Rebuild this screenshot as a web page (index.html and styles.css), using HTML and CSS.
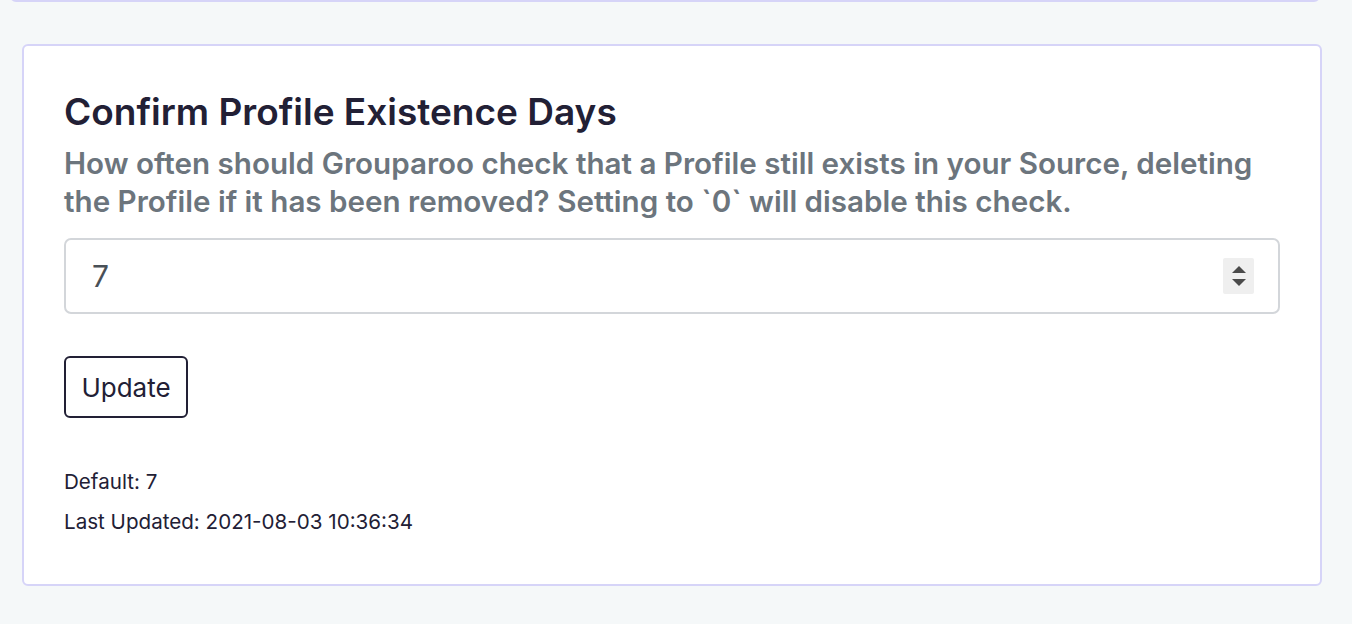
FILE: index.html
```html
<!DOCTYPE html>
<html>
<head>
<meta charset="utf-8">
<link rel="stylesheet" href="styles.css">
</head>
<body>
<div class="page">
  <div class="card card-prev"></div>
  <div class="card">
    <h3 class="title">Confirm Profile Existence Days</h3>
    <p class="desc">How often should Grouparoo check that a Profile still exists in your Source, deleting the Profile if it has been removed? Setting to `0` will disable this check.</p>
    <div class="field">
      <input class="field-input" type="text" value="7">
      <span class="spinner">
        <svg width="16" height="24" viewBox="0 0 16 24"><path d="M8 2 L15 9 L1 9 Z" fill="#4a4a4a"/><path d="M1 15 L15 15 L8 22 Z" fill="#4a4a4a"/></svg>
      </span>
    </div>
    <button class="btn">Update</button>
    <div class="meta">
      <p>Default: 7</p>
      <p>Last Updated: 2021-08-03 10:36:34</p>
    </div>
  </div>
</div>
</body>
</html>
```
FILE: styles.css
```css
* { box-sizing: border-box; }
html, body { margin: 0; padding: 0; }
body {
  background: #f5f8f9;
  font-family: Inter, Roboto, "Liberation Sans", sans-serif;
  color: #212136;
}
.page {
  padding: 0 30px 0 22px;
  display: flex;
  flex-direction: column;
  gap: 42px;
}
.card {
  background: #fff;
  border: 2px solid #d6d4f8;
  border-radius: 6px;
  padding: 44px 40px 48px 40px;
}
.card-prev {
  margin: -40px 2px 0 -12px;
  height: 42px;
  padding: 0;
}
.title {
  margin: 0 0 10px 0;
  font-size: 37px;
  font-weight: 600;
  line-height: 44px;
  color: #222035;
}
.desc {
  margin: 0 0 18px 0;
  font-size: 29.6px;
  font-weight: 600;
  line-height: 38px;
  color: #6c757d;
}
.field {
  display: flex;
  align-items: center;
  height: 76px;
  border: 2px solid #d3d6da;
  border-radius: 7px;
  padding: 0 24px 0 26px;
}
.field-input {
  flex: 1;
  border: 0;
  outline: none;
  font-family: inherit;
  font-size: 30px;
  color: #495057;
  padding: 0;
  background: transparent;
}
.spinner {
  width: 31px;
  height: 36px;
  background: #efefef;
  border-radius: 2px;
  display: flex;
  align-items: center;
  justify-content: center;
}
.btn {
  margin-top: 42px;
  align-self: flex-start;
  font-family: inherit;
  font-size: 26px;
  color: #222035;
  background: #fff;
  border: 2px solid #222035;
  border-radius: 6px;
  height: 62px;
  width: 124px;
  padding: 0;
}
.meta {
  margin-top: 50px;
  font-size: 20.6px;
  color: #222035;
}
.meta p { margin: 0 0 12px 0; line-height: 28px; }
.meta p:last-child { margin-bottom: 0; }
```
